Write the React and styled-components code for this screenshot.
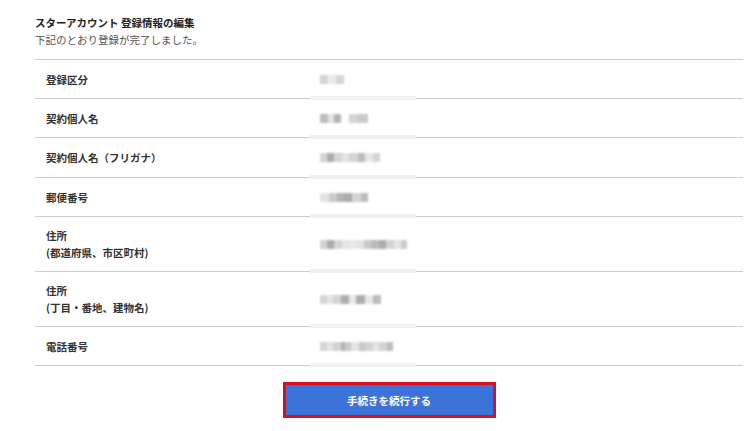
import React from "react";
import styled, { createGlobalStyle } from "styled-components";

const Global = createGlobalStyle`
  html, body { margin: 0; padding: 0; background: #fff; }
  body { font-family: "Noto Sans CJK JP", "Noto Sans", sans-serif; color: #222; }
`;

const Page = styled.div`
  width: 750px;
  height: 431px;
  padding: 14px 7px 0 35px;
  box-sizing: border-box;
  overflow: hidden;
`;

const Title = styled.h1`
  margin: 0;
  font-size: 10.5px;
  font-weight: 700;
  line-height: 17px;
  color: #222;
`;

const Sub = styled.p`
  margin: 0 0 11px;
  font-size: 10.5px;
  line-height: 17px;
  color: #555;
`;

const Table = styled.div`
  border-top: 1px solid #c9cdd0;
`;

const Row = styled.div`
  position: relative;
  display: grid;
  grid-template-columns: 274px 1fr;
  align-items: center;
  height: ${(p) => p.$h}px;
  padding-left: 11px;
  border-bottom: 1px solid #c9cdd0;
  &::after {
    content: "";
    position: absolute;
    left: 275px;
    width: 106px;
    bottom: -2px;
    height: 4px;
    background: #eff1f2;
  }
`;

const Label = styled.div`
  font-size: 10.5px;
  font-weight: 700;
  line-height: 17px;
  color: #333;
`;

const Mosaic = styled.div`
  display: flex;
  align-items: center;
  height: 12px;
  filter: blur(0.8px);
`;

const Cell = styled.span`
  display: block;
  width: ${(p) => p.$w}px;
  height: 9px;
  background: ${(p) => p.$c};
`;

const Footer = styled.div`
  display: flex;
  justify-content: center;
  padding: 16px 0 0 0;
`;

const Button = styled.button`
  width: 213px;
  height: 36px;
  border: 3px solid #d4111e;
  background: #3d72d9;
  color: #fff;
  font-family: "Noto Sans CJK JP", "Noto Sans", sans-serif;
  font-size: 10.5px;
  font-weight: 700;
  cursor: pointer;
`;

const shades = ["#d4d4d4", "#bcbcbc", "#e4e4e4", "#acacac", "#cacaca", "#e8e8e8", "#b4b4b4"];

const makeCells = (widths) =>
  widths.map((w, i) => ({ w: Math.abs(w), c: w < 0 ? "transparent" : shades[(i * 3 + w) % shades.length] }));

const rows = [
  { h: 38, label: ["登録区分"], cells: makeCells([7, 9, 8]) },
  { h: 38, label: ["契約個人名"], cells: makeCells([8, 6, 7, -8, 9, 10]) },
  { h: 39, label: ["契約個人名（フリガナ）"], cells: makeCells([7, 7, 8, 7, 9, 7, 8, 7]) },
  { h: 38, label: ["郵便番号"], cells: makeCells([9, 8, 7, 8, 9, 7]) },
  { h: 54, label: ["住所", "(都道府県、市区町村)"], cells: makeCells([7, 7, 8, 7, 7, 8, 7, 8, 7, 8, 7, 6]) },
  { h: 54, label: ["住所", "(丁目・番地、建物名)"], cells: makeCells([7, 6, 8, 8, 7, 9, 8, 8]) },
  { h: 38, label: ["電話番号"], cells: makeCells([7, 6, 8, 4, 6, 8, 7, 7, 6, 8, 6]) },
];

export default function App() {
  return (
    <Page>
      <Global />
      <Title>スターアカウント 登録情報の編集</Title>
      <Sub>下記のとおり登録が完了しました。</Sub>
      <Table>
        {rows.map((r, i) => (
          <Row key={i} $h={r.h}>
            <Label>
              {r.label.map((l, j) => (
                <div key={j}>{l}</div>
              ))}
            </Label>
            <Mosaic>
              {r.cells.map((c, j) => (
                <Cell key={j} $w={c.w} $c={c.c} />
              ))}
            </Mosaic>
          </Row>
        ))}
      </Table>
      <Footer>
        <Button>手続きを続行する</Button>
      </Footer>
    </Page>
  );
}
